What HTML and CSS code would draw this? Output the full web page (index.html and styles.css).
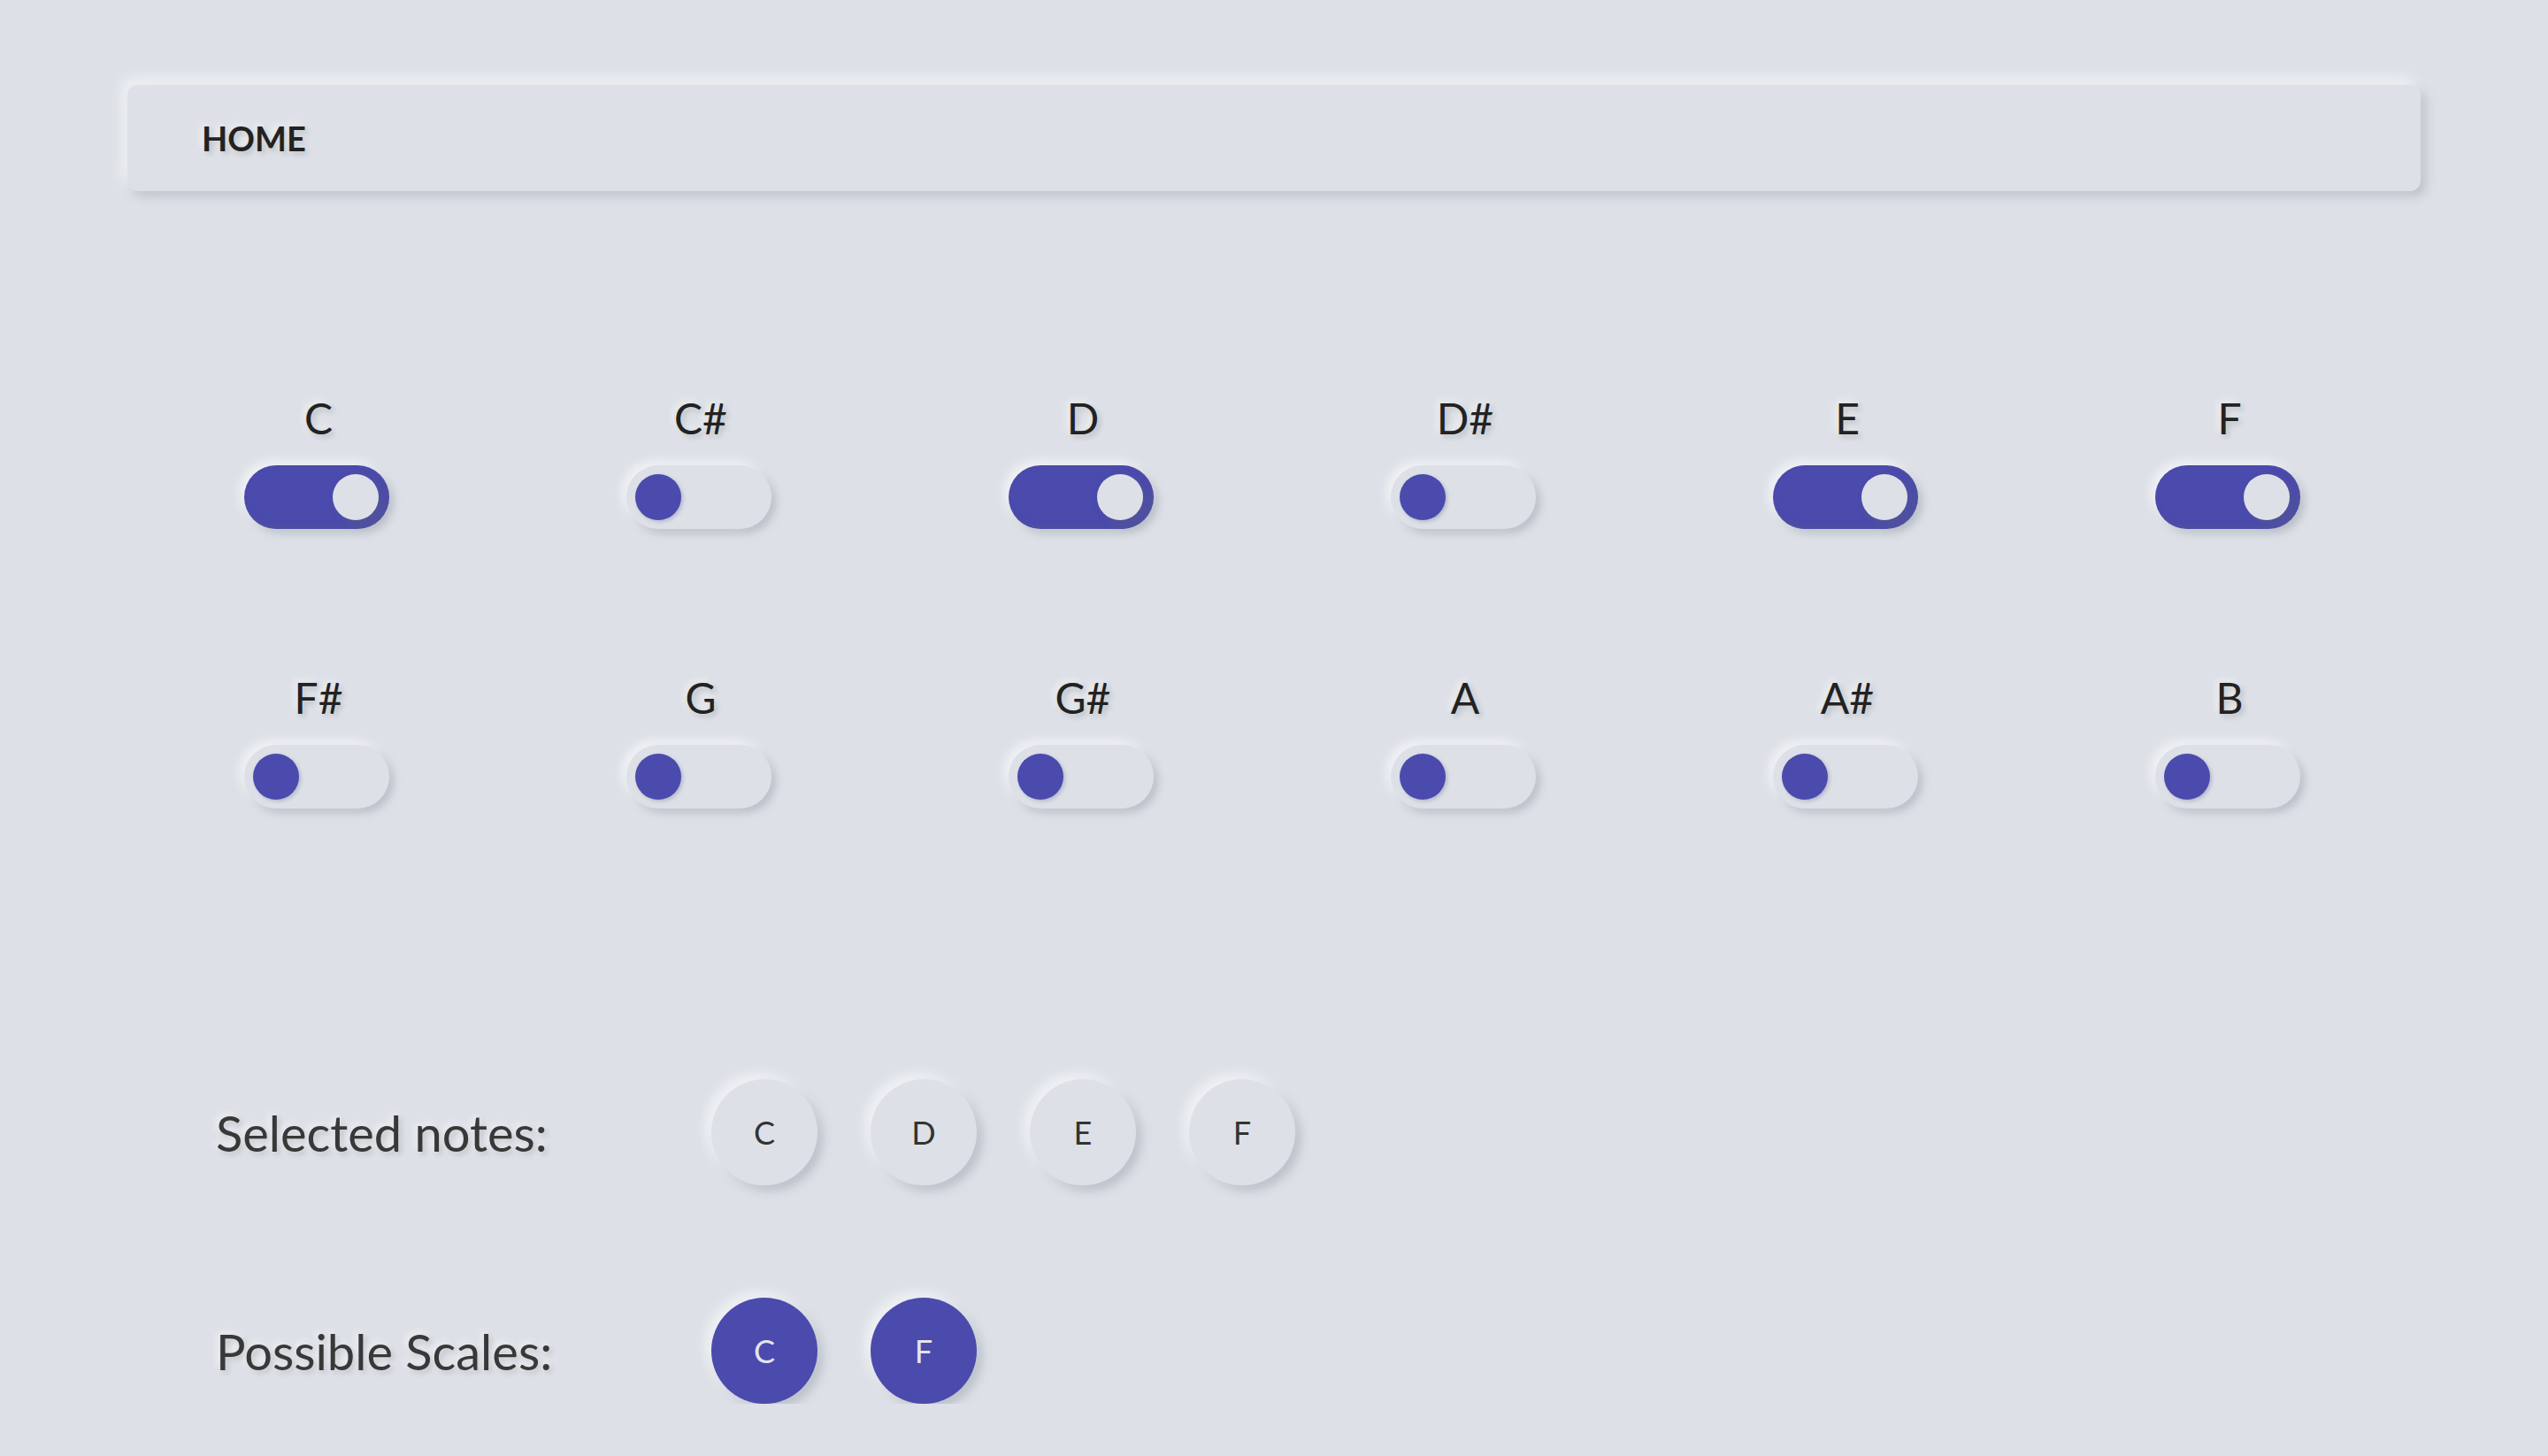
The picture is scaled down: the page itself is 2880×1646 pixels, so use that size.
FILE: index.html
```html
<!DOCTYPE html>
<html lang="en">
<head>
<meta charset="utf-8">
<title>Scale finder</title>
<link rel="stylesheet" href="styles.css">
</head>
<body>
<div class="page">
  <nav class="navbar"><span class="nav-link">HOME</span></nav>

  <div class="notes-grid">
    <div class="note"><span class="note-label">C</span><div class="toggle on"><span class="knob"></span></div></div>
    <div class="note"><span class="note-label">C#</span><div class="toggle"><span class="knob"></span></div></div>
    <div class="note"><span class="note-label">D</span><div class="toggle on"><span class="knob"></span></div></div>
    <div class="note"><span class="note-label">D#</span><div class="toggle"><span class="knob"></span></div></div>
    <div class="note"><span class="note-label">E</span><div class="toggle on"><span class="knob"></span></div></div>
    <div class="note"><span class="note-label">F</span><div class="toggle on"><span class="knob"></span></div></div>
    <div class="note"><span class="note-label">F#</span><div class="toggle"><span class="knob"></span></div></div>
    <div class="note"><span class="note-label">G</span><div class="toggle"><span class="knob"></span></div></div>
    <div class="note"><span class="note-label">G#</span><div class="toggle"><span class="knob"></span></div></div>
    <div class="note"><span class="note-label">A</span><div class="toggle"><span class="knob"></span></div></div>
    <div class="note"><span class="note-label">A#</span><div class="toggle"><span class="knob"></span></div></div>
    <div class="note"><span class="note-label">B</span><div class="toggle"><span class="knob"></span></div></div>
  </div>

  <div class="results">
    <div class="result-row">
      <span class="result-title">Selected notes:</span>
      <div class="chips">
        <span class="chip">C</span>
        <span class="chip">D</span>
        <span class="chip">E</span>
        <span class="chip">F</span>
      </div>
    </div>
    <div class="result-row scales">
      <span class="result-title">Possible Scales:</span>
      <div class="chips">
        <span class="chip filled">C</span>
        <span class="chip filled">F</span>
      </div>
    </div>
  </div>
</div>
</body>
</html>
```

FILE: styles.css
```css
html, body {
  margin: 0;
  padding: 0;
  background: #dde1e7;
  font-family: Lato, "Open Sans", sans-serif;
  overflow: hidden;
}

.page {
  margin: 0 144px;
  padding-top: 96px;
}

.navbar {
  height: 120px;
  display: flex;
  align-items: center;
  padding-left: 84px;
  border-radius: 12px;
  background: #dde1e7;
  box-shadow: -6px -8px 16px rgba(255, 255, 255, 0.55),
              6px 6px 12px rgba(94, 104, 121, 0.25);
}

.nav-link {
  font-size: 38px;
  font-weight: 700;
  color: #222;
  line-height: 38px;
  text-shadow: -3px -3px 8px rgba(255, 255, 255, 0.6),
               3px 3px 6px rgba(0, 0, 0, 0.18);
}

.notes-grid {
  margin-top: 233px;
  display: grid;
  grid-template-columns: repeat(6, 1fr);
  row-gap: 167px;
  justify-items: center;
}

.note {
  display: flex;
  flex-direction: column;
  align-items: center;
}

.note-label {
  font-size: 48px;
  line-height: 48px;
  color: #222;
  margin-bottom: 29px;
  text-shadow: -3px -3px 8px rgba(255, 255, 255, 0.6),
               3px 3px 6px rgba(0, 0, 0, 0.18);
}

.toggle {
  position: relative;
  width: 164px;
  height: 72px;
  border-radius: 36px;
  background: #dde1e7;
  margin-left: -4px;
  box-shadow: -5px -5px 12px rgba(255, 255, 255, 0.6),
              5px 5px 10px rgba(94, 104, 121, 0.28);
}

.knob {
  position: absolute;
  top: 10px;
  left: 10px;
  width: 52px;
  height: 52px;
  border-radius: 50%;
  background: #4b4aad;
  box-shadow: 2px 2px 4px rgba(60, 60, 120, 0.25);
}

.toggle.on {
  background: #4b4aad;
  box-shadow: -5px -5px 12px rgba(255, 255, 255, 0.6),
              5px 5px 10px rgba(94, 104, 121, 0.28),
              inset -3px -3px 6px rgba(94, 104, 121, 0.25);
}

.toggle.on .knob {
  left: 100px;
  background: #dde1e7;
  box-shadow: 4px 4px 8px rgba(94, 104, 121, 0.35);
}

.results {
  margin-top: 306px;
  padding-left: 100px;
}

.result-row {
  display: flex;
  align-items: center;
  height: 120px;
}

.result-row.scales {
  margin-top: 127px;
}

.result-title {
  width: 560px;
  font-size: 56px;
  color: #383838;
  text-shadow: -3px -3px 8px rgba(255, 255, 255, 0.6),
               3px 3px 6px rgba(0, 0, 0, 0.15);
}

.chips {
  display: flex;
  gap: 60px;
}

.chip {
  width: 120px;
  height: 120px;
  border-radius: 50%;
  display: flex;
  align-items: center;
  justify-content: center;
  font-size: 36px;
  color: #333;
  background: #dde1e7;
  box-shadow: -6px -6px 14px rgba(255, 255, 255, 0.6),
              6px 6px 12px rgba(94, 104, 121, 0.28);
}

.chip.filled {
  background: #4b4aad;
  color: #e3e5ee;
}
```
